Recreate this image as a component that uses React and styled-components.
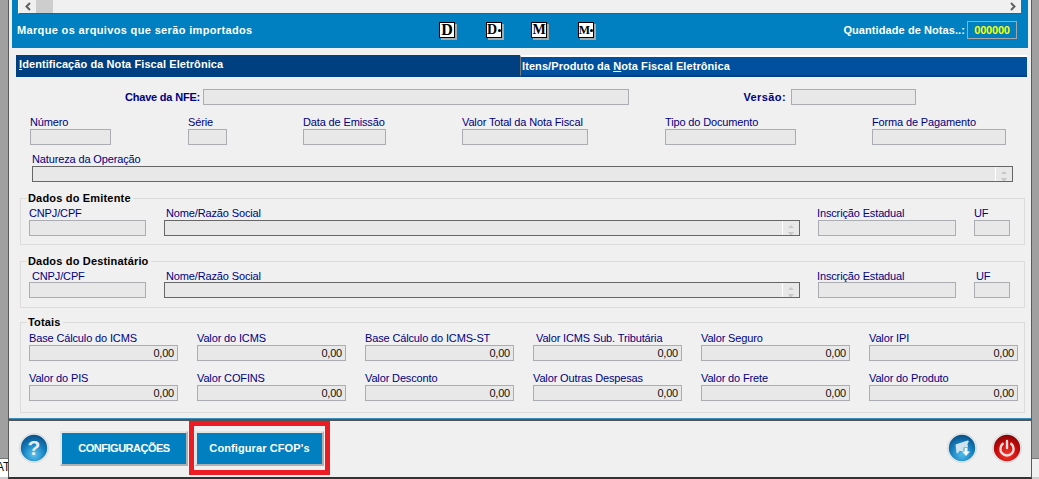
import React from "react"
import styled, { createGlobalStyle } from "styled-components"

const GlobalStyle = createGlobalStyle`
  html, body {
    margin: 0;
    padding: 0;
    background: #f0f0f0;
    overflow: hidden;
  }
  * {
    box-sizing: border-box;
  }
`

const Screen = styled.div`
  display: flex;
  width: 1039px;
  height: 479px;
  overflow: hidden;
  background: #f0f0f0;
  font-family: "Liberation Sans", Arial, sans-serif;
  font-size: 11px;
`

const Rail = styled.div`
  display: flex;
  flex-direction: column;
  flex: none;
  width: ${(p) => p.$w}px;
  height: 100%;
`

const RailTop = styled.div`
  height: 458px;
  flex: none;
  background: #a0a0a0;
`

const RailBottom = styled.div`
  flex: 1;
  overflow: hidden;
  white-space: nowrap;
  border-top: 1px solid #777;
  border-bottom: 2px solid #ccc;
  background: ${(p) => p.$bg};
  color: #111;
  font-size: 12px;
  line-height: 16px;
  text-indent: -4px;
`

const Main = styled.div`
  display: flex;
  flex-direction: column;
  flex: 1;
  min-width: 0;
  border-left: 1px solid #5a5a5a;
  border-right: 1px solid #5a5a5a;
  border-bottom: 2px solid #333;
`

const Header = styled.header`
  flex: none;
  width: 1016px;
  height: 48px;
  margin-left: 3px;
  background: #0080c0;
`

const ScrollBar = styled.div`
  display: flex;
  align-items: center;
  width: 1003px;
  height: 14px;
  margin-left: 6px;
  padding: 0 4px 1px 5px;
  background: #f0f0f0;
  border-left: 1px solid #fff;
  border-bottom: 1px solid #555;
`

const ScrollThumb = styled.div`
  width: 17px;
  height: 13px;
  margin-left: 4px;
  background: #cdcdcd;
`

const ScrollEnd = styled.div`
  margin-left: auto;
  line-height: 0;
`

const Toolbar = styled.div`
  display: flex;
  align-items: center;
  height: 34px;
  padding: 0 11px 2px 5px;
`

const ToolbarTitle = styled.div`
  width: 422px;
  flex: none;
  color: #fff;
  font-weight: 700;
  font-size: 11px;
  letter-spacing: 0.35px;
  white-space: nowrap;
`

const FormatButton = styled.div`
  display: flex;
  align-items: center;
  justify-content: center;
  flex: none;
  width: 16px;
  height: 16px;
  margin-left: ${(p) => p.$ml || 0}px;
  background: #fff;
  border: 1px solid #000;
  box-shadow: 2px 2px 0 #a8a8a8;
  color: #000;
  font-family: "Liberation Serif", serif;
  font-weight: 700;
  font-size: ${(p) => p.$size}px;
  line-height: 1;
`

const FormatPlus = styled.span`
  flex: none;
  width: 3px;
  height: 3px;
  margin-left: ${(p) => p.$ml}px;
  background: #000;
  border-radius: 50%;
`

const CountLabel = styled.div`
  margin-left: auto;
  color: #fff;
  font-weight: 700;
  letter-spacing: 0.08px;
  white-space: nowrap;
`

const CountBox = styled.div`
  width: 50px;
  height: 18px;
  margin-left: 2px;
  border: 1px solid #a8a8a8;
  color: #ffff00;
  font-weight: 700;
  line-height: 16px;
  text-align: center;
  letter-spacing: -0.2px;
`

const Tabs = styled.nav`
  display: flex;
  flex: none;
  width: 1011px;
  height: 22px;
  margin: 7px 0 0 7px;
`

const Tab = styled.div`
  width: ${(p) => p.$w}px;
  padding: ${(p) => (p.$active ? "2px 0 0 3px" : "2px 0 0 1px")};
  background: ${(p) => (p.$active ? "#004080" : "#0050a0")};
  border-top: ${(p) => (p.$active ? "0" : "2px solid #fff")};
  border-left: ${(p) => (p.$active ? "0" : "1px solid #777")};
  border-bottom: ${(p) => (p.$active ? "0" : "2px solid #004080")};
  color: #fff;
  font-weight: 700;
  line-height: 14px;
  letter-spacing: 0.08px;
  white-space: nowrap;
`

const Form = styled.section`
  flex: 1;
  min-height: 0;
  padding-top: 12px;
`

const KeyRow = styled.div`
  display: flex;
  align-items: center;
  height: 16px;
`

const KeyLabel = styled.label`
  flex: none;
  width: ${(p) => p.$w}px;
  margin-right: ${(p) => p.$mr}px;
  color: #000080;
  font-weight: 700;
  letter-spacing: ${(p) => p.$ls}px;
  text-align: right;
  white-space: nowrap;
`

const Row = styled.div`
  display: flex;
  margin-top: ${(p) => p.$mt || 0}px;
`

const FieldBox = styled.div`
  flex: none;
  width: ${(p) => p.$w}px;
  margin-left: ${(p) => p.$ml || 0}px;
`

const FieldLabel = styled.label`
  display: block;
  height: 14px;
  padding-top: ${(p) => p.$ly || 0}px;
  padding-left: ${(p) => (p.$lx > 0 ? p.$lx : 0)}px;
  margin-left: ${(p) => (p.$lx < 0 ? p.$lx : 0)}px;
  color: #000080;
  font-size: 11px;
  line-height: 14px;
  letter-spacing: -0.14px;
  white-space: nowrap;
`

const Input = styled.div`
  position: relative;
  flex: none;
  width: ${(p) => (p.$w ? `${p.$w}px` : "100%")};
  height: 16px;
  padding-right: 3px;
  background: #e8e8e8;
  border: 1px solid ${(p) => (p.$dark ? "#666" : "#abadb3")};
  color: #111;
  font-size: 11px;
  line-height: 15px;
  letter-spacing: -0.2px;
  text-align: right;
`

const Spin = styled.span`
  position: absolute;
  top: 0;
  right: 0;
  bottom: 0;
  width: 17px;
  overflow: hidden;
  border-left: 1px solid #fff;
  &::before,
  &::after {
    content: "";
    position: absolute;
    left: 5px;
    border-left: 3px solid transparent;
    border-right: 3px solid transparent;
  }
  &::before {
    top: 4px;
    border-bottom: 3px solid #c8c8c8;
  }
  &::after {
    top: 11px;
    border-top: 4px solid #c8c8c8;
  }
`

const Group = styled.fieldset`
  position: relative;
  width: 1005px;
  height: ${(p) => p.$h}px;
  min-width: 0;
  margin: ${(p) => p.$mt}px 0 0 11px;
  padding: ${(p) => p.$pt}px 0 0 0;
  border: 1px solid #dcdcdc;
`

const GroupTitle = styled.div`
  position: absolute;
  top: -7px;
  left: 6px;
  padding: 0 2px 0 1px;
  background: #f0f0f0;
  color: #000;
  font-weight: 700;
  line-height: 13px;
  letter-spacing: 0.18px;
`

const Footer = styled.footer`
  display: flex;
  align-items: center;
  flex: none;
  height: 59px;
  padding: 0 9px 0 10px;
  border-top: 1px solid #3d8fc0;
  box-shadow: inset 0 2px 0 #555;
`

const RoundIcon = styled.svg`
  display: block;
  flex: none;
  width: 30px;
  height: 30px;
  margin-left: ${(p) => p.$ml || 0}px;
`

const ButtonWrap = styled.div`
  position: relative;
  flex: none;
  margin-left: ${(p) => p.$ml}px;
`

const ActionButton = styled.button`
  display: block;
  width: ${(p) => p.$w}px;
  height: 35px;
  padding: 0;
  background: #0080c0;
  border: 2px solid;
  border-color: #e4e4e4 #b0b0b0 #b0b0b0 #e4e4e4;
  color: #fff;
  font-family: inherit;
  font-size: 11px;
  font-weight: 700;
  letter-spacing: ${(p) => p.$ls}px;
`

const Highlight = styled.div`
  position: absolute;
  inset: -10px -6px -9px;
  border: 5px solid #ed1c24;
  pointer-events: none;
`

const FooterRight = styled.div`
  display: flex;
  margin-left: auto;
`

const Field = ({ label, w, ml, lx, ly, dark, spin, value }) => (
  <FieldBox $w={w} $ml={ml}>
    <FieldLabel $lx={lx} $ly={ly}>{label}</FieldLabel>
    <Input $dark={dark}>
      {value}
      {spin && <Spin />}
    </Input>
  </FieldBox>
)

const PartyRow = ({ cnpjLx, ufLx, ly }) => (
  <Row>
    <Field label="CNPJ/CPF" w={117} ml={8} lx={cnpjLx} ly={ly} />
    <Field label="Nome/Razão Social" w={636} ml={18} lx={2} ly={ly} dark spin />
    <Field label="Inscrição Estadual" w={138} ml={18} lx={-1} ly={ly} />
    <Field label="UF" w={36} ml={18} lx={ufLx} ly={ly} />
  </Row>
)

const totalsTop = [
  ["Base Cálculo do ICMS", 0],
  ["Valor do ICMS", 0],
  ["Base Cálculo do ICMS-ST", 0],
  ["Valor ICMS Sub. Tributária", 3],
  ["Valor Seguro", 0],
  ["Valor IPI", 0],
]

const totalsBottom = [
  ["Valor do PIS", 0],
  ["Valor COFINS", 0],
  ["Valor Desconto", 0],
  ["Valor Outras Despesas", 0],
  ["Valor do Frete", 0],
  ["Valor do Produto", 0],
]

const TotalsRow = ({ items, mt }) => (
  <Row $mt={mt}>
    {items.map(([label, lx], i) => (
      <Field key={label} label={label} lx={lx} w={149} ml={i === 0 ? 8 : 19} value="0,00" />
    ))}
  </Row>
)

const Chevron = ({ left }) => (
  <svg width="8" height="9" viewBox="0 0 8 9">
    <path
      d={left ? "M6 1 2.5 4.5 6 8" : "M2 1l3.5 3.5L2 8"}
      fill="none"
      stroke="#606060"
      strokeWidth="2"
    />
  </svg>
)

const Ball = ({ id, light, mid, dark, ml, children }) => (
  <RoundIcon viewBox="0 0 30 30" $ml={ml}>
    <defs>
      <radialGradient id={id} cx="50%" cy="75%" r="75%">
        <stop offset="0%" stopColor={light} />
        <stop offset="55%" stopColor={mid} />
        <stop offset="100%" stopColor={dark} />
      </radialGradient>
    </defs>
    <circle cx="15" cy="15" r="14.7" fill="#e8ebed" stroke="#cdd1d4" strokeWidth="0.6" />
    <circle cx="15" cy="15" r="13.2" fill={`url(#${id})`} />
    {children}
  </RoundIcon>
)

export default function App() {
  return (
    <Screen>
      <GlobalStyle />
      <Rail $w={8}>
        <RailTop />
        <RailBottom $bg="#fff">AT</RailBottom>
      </Rail>
      <Main>
        <Header>
          <ScrollBar>
            <Chevron left />
            <ScrollThumb />
            <ScrollEnd>
              <Chevron />
            </ScrollEnd>
          </ScrollBar>
          <Toolbar>
            <ToolbarTitle>Marque os arquivos que serão importados</ToolbarTitle>
            <FormatButton $size={16}>D</FormatButton>
            <FormatButton $ml={31} $size={14}>
              D
              <FormatPlus $ml={1} />
            </FormatButton>
            <FormatButton $ml={29} $size={14}>M</FormatButton>
            <FormatButton $ml={31} $size={12}>
              M
              <FormatPlus $ml={0} />
            </FormatButton>
            <CountLabel>Quantidade de Notas..:</CountLabel>
            <CountBox>000000</CountBox>
          </Toolbar>
        </Header>

        <Tabs>
          <Tab $active $w={504}>
            <u>I</u>dentificação da Nota Fiscal Eletrônica
          </Tab>
          <Tab $w={507}>
            Itens/Produto da <u>N</u>ota Fiscal Eletrônica
          </Tab>
        </Tabs>

        <Form>
          <KeyRow>
            <KeyLabel $w={191} $mr={3} $ls={-0.2}>Chave da NFE:</KeyLabel>
            <Input $w={426} />
            <KeyLabel $w={157} $mr={5} $ls={0.4}>Versão:</KeyLabel>
            <Input $w={125} />
          </KeyRow>

          <Row $mt={10}>
            <Field label="Número" w={81} ml={21} />
            <Field label="Série" w={39} ml={77} />
            <Field label="Data de Emissão" w={83} ml={76} />
            <Field label="Valor Total da Nota Fiscal" w={126} ml={76} />
            <Field label="Tipo do Documento" w={131} ml={77} />
            <Field label="Forma de Pagamento" w={134} ml={76} />
          </Row>

          <Row $mt={7}>
            <Field label="Natureza da Operação" w={981} ml={23} dark spin />
          </Row>

          <Group $h={47} $mt={16} $pt={7}>
            <GroupTitle>Dados do Emitente</GroupTitle>
            <PartyRow cnpjLx={0} ufLx={0} />
          </Group>

          <Group $h={47} $mt={16} $pt={6}>
            <GroupTitle>Dados do Destinatário</GroupTitle>
            <PartyRow cnpjLx={3} ufLx={2} ly={1} />
          </Group>

          <Group $h={91} $mt={14} $pt={8}>
            <GroupTitle>Totais</GroupTitle>
            <TotalsRow items={totalsTop} />
            <TotalsRow items={totalsBottom} mt={10} />
          </Group>
        </Form>

        <Footer>
          <Ball id="helpBall" light="#5cc4ee" mid="#1580c0" dark="#0a4f86">
            <text
              x="15"
              y="22"
              textAnchor="middle"
              fontFamily="Liberation Sans, sans-serif"
              fontWeight="700"
              fontSize="21"
              fill="#e6eef4"
            >
              ?
            </text>
          </Ball>
          <ButtonWrap $ml={11}>
            <ActionButton $w={128} $ls={-0.5}>CONFIGURAÇÕES</ActionButton>
          </ButtonWrap>
          <ButtonWrap $ml={7}>
            <ActionButton $w={129} $ls={0.1}>Configurar CFOP's</ActionButton>
            <Highlight />
          </ButtonWrap>
          <FooterRight>
            <Ball id="importBall" light="#4fbbe8" mid="#1580c0" dark="#0a4f86">
              <path d="M8.5 11.5 20.5 7.5 22 8 20.5 11 21 14.5H16.5V18H12.5L10.5 20.5 9.5 20Z" fill="#cfe3ef" />
              <path d="M17.5 15H20.5V18.5H23L19 23 15 18.5H17.5Z" fill="#f4f8fb" />
            </Ball>
            <Ball id="powerBall" light="#f03a2c" mid="#cc0a0a" dark="#860404" ml={15}>
              <path
                d="M10.8 10.8a6.6 6.6 0 1 0 8.4 0"
                fill="none"
                stroke="#f3dcdc"
                strokeWidth="2.4"
                strokeLinecap="round"
              />
              <path d="M15 8v7" stroke="#f3dcdc" strokeWidth="2.4" strokeLinecap="round" />
            </Ball>
          </FooterRight>
        </Footer>
      </Main>
      <Rail $w={7}>
        <RailTop />
        <RailBottom $bg="#f0f0f0" />
      </Rail>
    </Screen>
  )
}
